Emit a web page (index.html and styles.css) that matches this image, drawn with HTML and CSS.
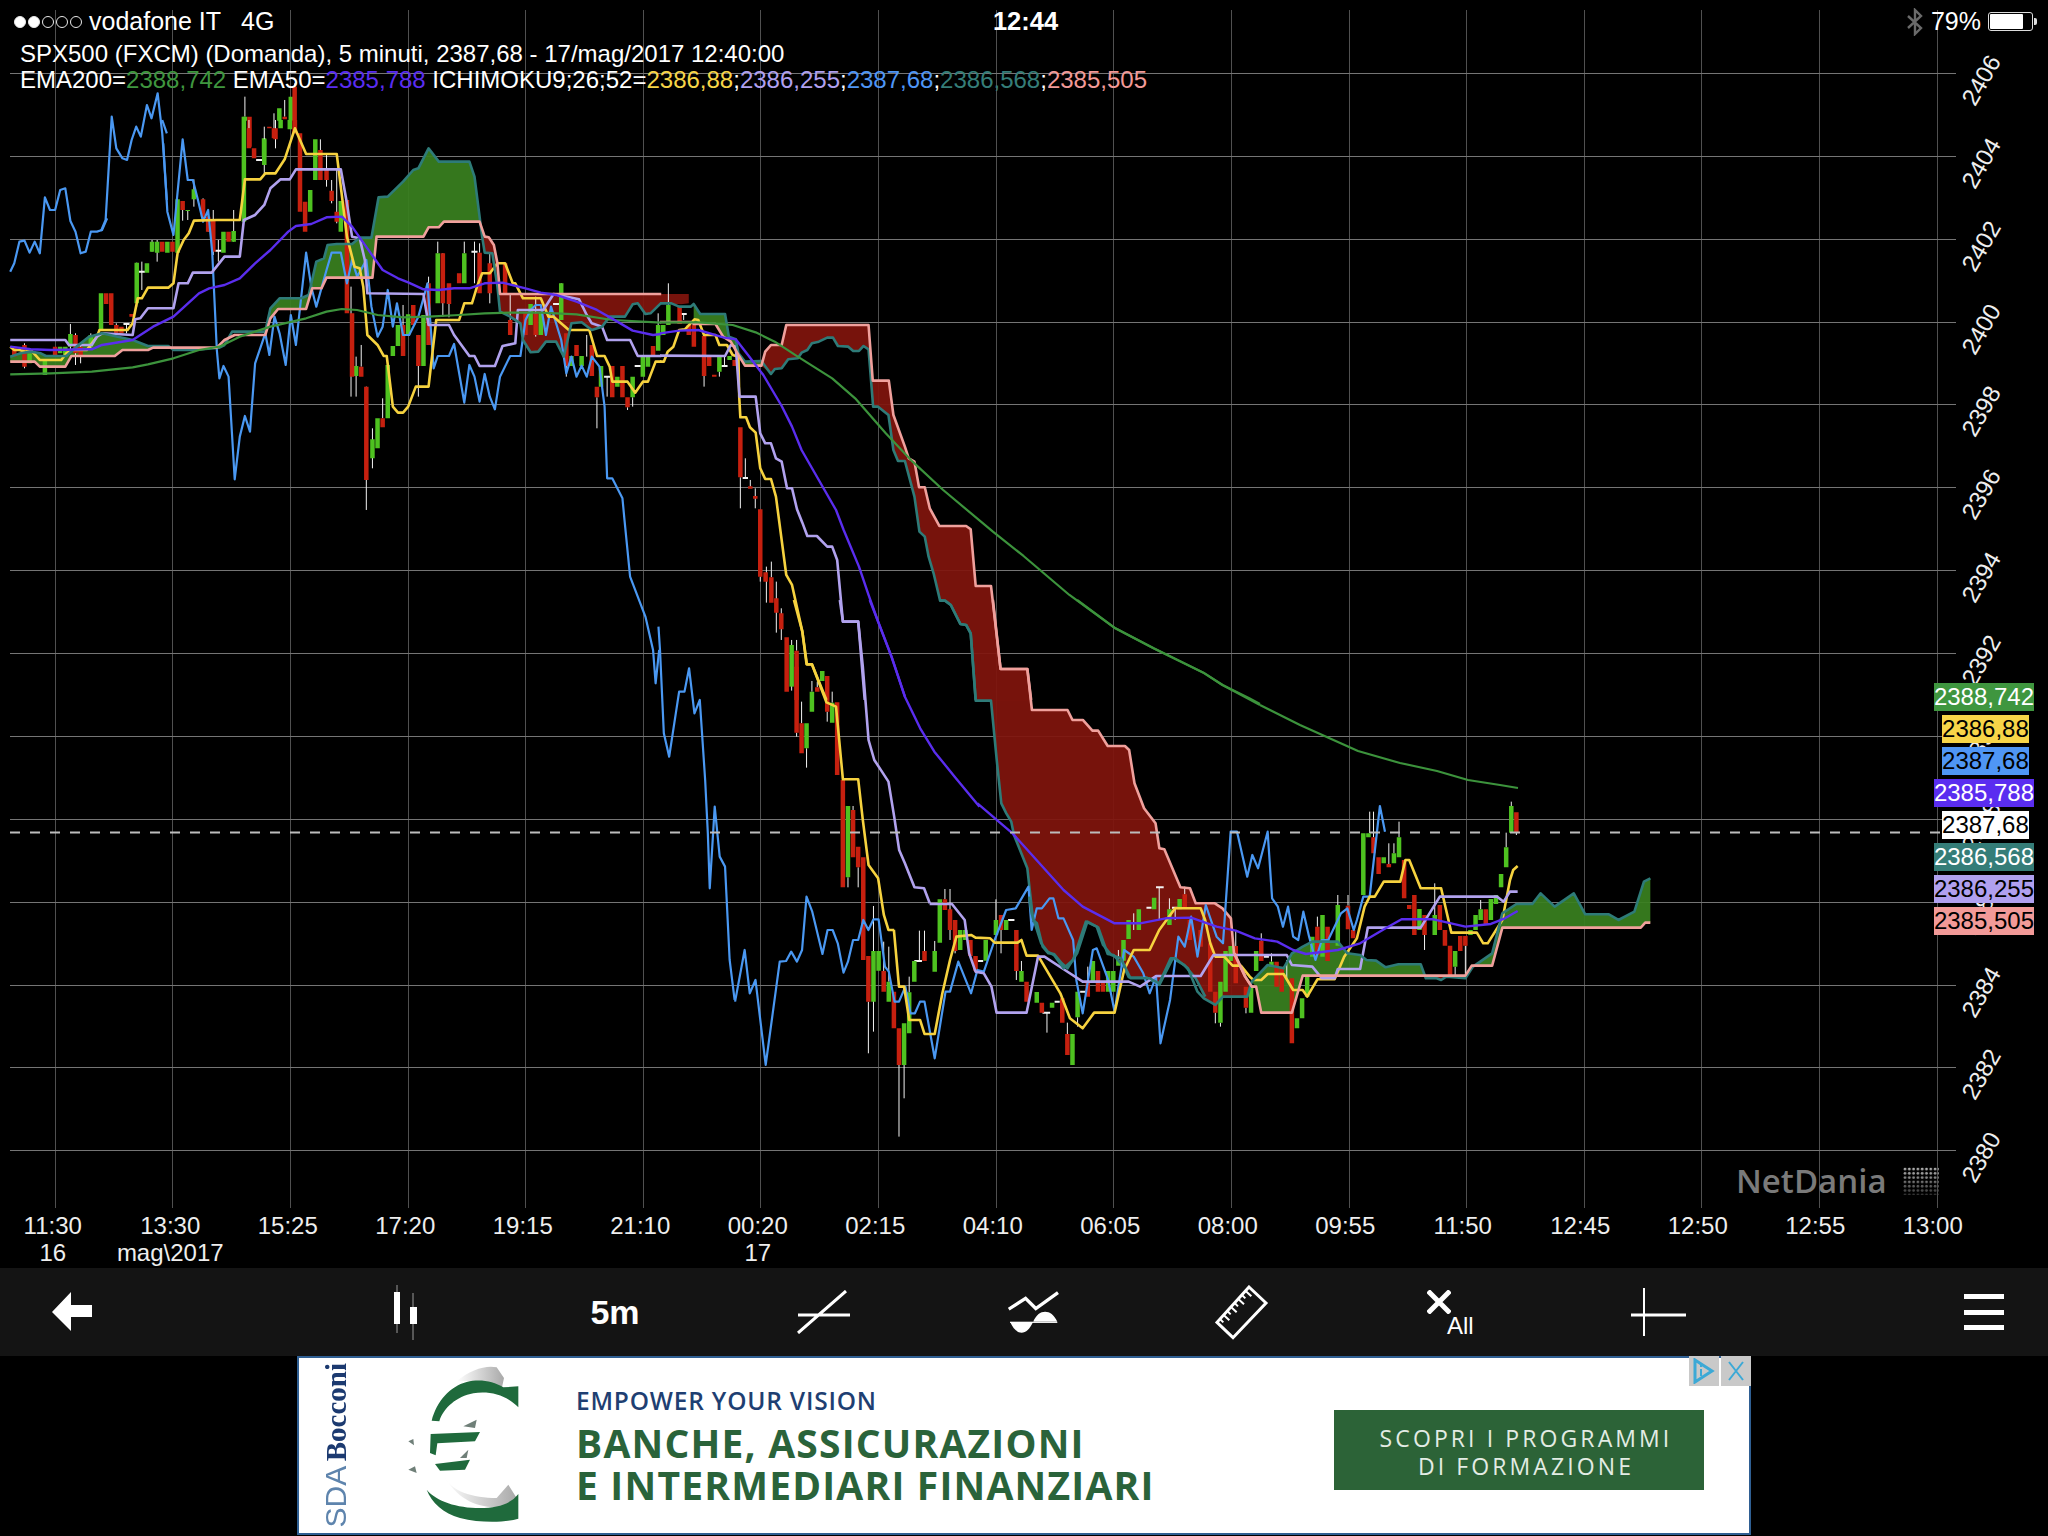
FILE: index.html
```html
<!DOCTYPE html>
<html lang="it">
<head>
<meta charset="utf-8">
<title>SPX500 chart</title>
<link rel="stylesheet" href="styles.css">
</head>
<body>
<div class="page">
  <section class="chart-area">
    <svg class="chart" width="2048" height="1208" viewBox="0 0 2048 1208">
      <defs>
        <pattern id="dots" width="4.3" height="4.3" patternUnits="userSpaceOnUse">
          <circle cx="2" cy="2" r="1.4" fill="#fff"/>
        </pattern>
        <linearGradient id="fade" x1="0" y1="0" x2="0" y2="1">
          <stop offset="0" stop-color="#bbb"/>
          <stop offset="1" stop-color="#333"/>
        </linearGradient>
        <mask id="dotmask"><rect width="2048" height="1208" fill="url(#dots)"/></mask>
      </defs>
      <path class="grid-v" d="M55.5 10V1208M172.5 10V1208M290.5 10V1208M408.5 10V1208M525.5 10V1208M643.5 10V1208M760.5 10V1208M878.5 10V1208M996.5 10V1208M1113.5 10V1208M1231.5 10V1208M1349.5 10V1208M1466.5 10V1208M1584.5 10V1208M1701.5 10V1208M1819.5 10V1208M1937.5 10V1208"/>
      <path class="grid-h" d="M10 73.5H1956M10 156.5H1956M10 239.5H1956M10 322.5H1956M10 404.5H1956M10 487.5H1956M10 570.5H1956M10 653.5H1956M10 736.5H1956M10 819.5H1956M10 902.5H1956M10 985.5H1956M10 1067.5H1956M10 1150.5H1956"/>

      <text class="ylab" transform="translate(1981 80) rotate(-60)">2406</text>
      <text class="ylab" transform="translate(1981 163) rotate(-60)">2404</text>
      <text class="ylab" transform="translate(1981 246) rotate(-60)">2402</text>
      <text class="ylab" transform="translate(1981 329) rotate(-60)">2400</text>
      <text class="ylab" transform="translate(1981 411) rotate(-60)">2398</text>
      <text class="ylab" transform="translate(1981 494) rotate(-60)">2396</text>
      <text class="ylab" transform="translate(1981 577) rotate(-60)">2394</text>
      <text class="ylab" transform="translate(1981 660) rotate(-60)">2392</text>
      <text class="ylab" transform="translate(1981 743) rotate(-60)">2390</text>
      <text class="ylab" transform="translate(1981 826) rotate(-60)">2388</text>
      <text class="ylab" transform="translate(1981 909) rotate(-60)">2386</text>
      <text class="ylab" transform="translate(1981 992) rotate(-60)">2384</text>
      <text class="ylab" transform="translate(1981 1074) rotate(-60)">2382</text>
      <text class="ylab" transform="translate(1981 1157) rotate(-60)">2380</text>

      <!-- clouds -->
      <g transform="translate(0 120) scale(.5102 .3333)">
        <polygon class="cl-g" points="20,710 40,700 60,695 80,700 90,708 130,708 150,680 175,650 200,640 260,660 290,678 300,683 290,690 240,690 225,708 140,708 128,740 78,740 68,725 20,725"/>
        <polygon class="cl-g" points="520,635 530,565 548,535 590,535 605,525 620,425 635,415 642,375 660,372 690,372 705,353 728,353 742,232 760,230 790,185 810,150 820,145 840,85 860,125 920,125 930,170 945,350 940,305 870,305 860,322 840,322 830,350 738,350 730,473 640,473 630,505 612,505 600,567 545,567 530,595 520,645"/>
        <polygon class="cl-r" points="945,350 958,352 968,375 975,430 980,522 1350,522 1350,550 1335,553 1295,550 1275,580 1265,582 1250,550 1240,553 1225,590 1195,590 1180,620 1160,630 1140,607 1120,610 1105,710 1090,665 1070,665 1055,695 1040,697 1025,660 1020,610 1000,590 980,575 975,500 965,400 950,398"/>
      </g>
      <g transform="translate(660 300) scale(.38265 .3333)">
        <polygon class="cl-g" points="88,12 105,42 170,42 180,110 198,118 205,160 222,185 265,183 265,197 222,197 205,165 185,125 165,110 145,72 88,72"/>
        <polygon class="cl-r" points="265,197 275,155 290,135 318,135 330,75 545,75 556,242 598,242 610,345 640,440 650,475 665,485 677,562 692,562 705,625 730,678 800,678 812,688 825,858 865,858 890,1107 960,1107 970,1201 825,1201 812,1000 800,975 785,972 760,915 745,902 732,902 715,820 702,770 692,710 678,695 665,590 640,483 622,483 610,450 597,345 570,320 557,320 545,148 532,138 520,153 505,153 492,140 465,138 452,113 437,113 415,125 397,130 385,150 370,158 360,175 335,178 318,205 300,207 290,222"/>
      </g>
      <g transform="translate(660 600) scale(.38265 .3333)">
        <polygon class="cl-r" points="825,300 868,300 880,300 972,300 972,330 1065,330 1078,360 1105,360 1130,392 1145,392 1170,438 1215,438 1226,450 1240,550 1265,625 1295,670 1305,745 1318,748 1360,862 1385,865 1400,910 1450,910 1470,925 1492,955 1500,1060 1529,1130 1546,1160 1546,1190 1471,1190 1451,1215 1421,1195 1400,1135 1370,1095 1340,1075 1305,1155 1272,1133 1225,1132 1212,1100 1185,1065 1170,1062 1145,982 1117,965 1090,1060 1065,1105 1050,1090 1030,1062 1015,1060 1000,1040 985,970 975,960 960,810 925,705 918,665 905,640 892,610 880,480 865,302 825,302"/>
      </g>
      <g transform="translate(700 780) scale(.6378 .3333)">
        <polygon class="cl-g" points="865,605 890,555 915,565 928,520 945,500 960,485 1000,485 1015,520 1035,525 1045,540 1060,542 1075,562 1095,553 1130,553 1138,587 945,587 928,698 880,698 872,620"/>
        <polygon class="cl-r" points="1138,587 1200,587 1200,595 1170,590 1162,600 1155,595 1138,595"/>
        <polygon class="cl-g" points="1200,590 1212,560 1242,520 1250,460 1258,400 1280,372 1305,372 1318,340 1340,380 1370,340 1388,403 1425,403 1440,420 1465,395 1480,305 1490,295 1490,428 1482,428 1475,443 1258,443 1242,557 1210,557"/>
      </g>

      <!-- candles -->
      <g transform="translate(0 0) scale(.7653 .3333)">
        <path class="wick" d="M320 290V350M358 340V385M372 300V350M385 250V260"/>
        <path class="c-up" d="M320 350V362M365 325V362M380 290V362M345 415V470"/>
        <path class="c-dn" d="M326 350V440M372 350V358M385 260V400M358 385V415"/>
      </g>
      <g transform="translate(0 120) scale(.5102 .3333)">
        <path class="wick" d="M48 670V745M138 612V690M148 640V735M158 670V730M178 640V690M228 610V640M248 612V640M278 425V510M268 428V560M298 360V395M308 360V425M348 238V410M358 243V302M368 270V300M380 178V260M398 235V300M408 270V335M418 270V405M428 360V425M458 270V365M488 0V25M518 20V165M540 0V85M628 58V90M640 100V200M650 180V250M660 150V310M688 500V830M698 710V830M708 675V740M718 800V1170M730 925V1045M750 835V895M790 555V615M820 645V830M840 470V490M858 365V400M868 400V590M880 550V592M910 365V400M930 365V490M940 370V398M960 400V550M1000 520V600M1050 530V650M1100 490V600M1110 738V770M1150 645V710M1170 832V925M1190 770V830M1230 862V870M1240 832V860M1290 580V615M1310 490V555M1340 582V600M1380 768V800M1410 755V770M1420 708V740"/>
        <path class="doji" d="M242 612H254M272 455H284M422 392H434M502 120H514M924 395H936M1184 770H1196M1334 582H1346M1414 738H1426M1084 552H1096M1244 738H1256"/>
        <path class="c-up" d="M58 700V730M88 720V765M118 680V700M128 680V705M138 642V680M178 645V680M198 520V630M268 428V550M288 430V458M298 365V395M308 365V398M328 365V398M348 238V398M368 270V273M380 208V238M438 335V398M458 333V365M478 -10V305M518 58V135M550 0V25M568 0V28M608 210V275M618 58V180M668 243V335M698 738V768M730 958V1015M740 895V985M760 735V895M770 678V708M780 615V678M800 583V645M830 585V738M858 400V550M910 400V490M1040 552V615M1060 580V645M1100 490V600M1120 708V738M1140 708V738M1178 738V800M1210 770V800M1240 770V832M1260 708V770M1270 708V740M1290 615V692M1300 615V645M1310 555V615M1410 710V755M1430 708V720"/>
        <path class="c-dn" d="M28 680V710M48 675V740M108 680V710M148 645V700M158 680V710M208 520V552M218 520V615M228 615V640M238 620V640M258 582V590M318 365V395M338 365V395M358 243V270M398 238V290M408 290V335M418 300V395M448 335V365M488 25V85M498 85V115M528 20V25M540 25V58M578 0V40M588 40V275M598 245V335M628 90V180M640 150V180M650 212V243M660 275V305M680 240V580M690 580V770M708 740V770M718 800V1080M750 895V922M790 615V708M810 555V615M820 645V738M840 490V675M868 400V550M880 490V552M900 460V490M940 398V520M960 430V520M990 430V520M1000 600V645M1030 580V645M1050 580V645M1110 640V738M1130 675V708M1160 675V768M1170 800V832M1200 738V832M1220 738V832M1230 832V862M1280 678V708M1332 560V612M1350 615V645M1360 615V680M1380 648V768M1390 708V738M1400 764V770M1440 720V738"/>
      </g>
      <g transform="translate(660 300) scale(.38265 .3333)">
        <path class="wick" d="M210 532V625M223 475V534M236 540V560M249 565V625M262 830V845M278 800V908M291 785V832M304 845V998M317 925V1020M344 1020V1172M357 1020V1052"/>
        <path class="doji" d="M216 534H230"/>
        <path class="c-up" d="M344 1035V1160"/>
        <path class="c-dn" d="M210 382V532M236 559V566M249 588V596M262 628V830M276 817V845M291 832V908M304 895V938M317 940V988M331 1012V1175M357 1052V1200"/>
      </g>
      <g transform="translate(660 600) scale(.38265 .3333)">
        <path class="wick" d="M370 305V370M383 445V503M397 243V275M411 245V262M437 335V365M450 275V308M357 398V410"/>
        <path class="c-up" d="M383 370V445M397 275V335M424 213V243M450 308V368"/>
        <path class="c-dn" d="M357 200V398M370 370V460M411 262V275M437 228V335M463 307V525"/>
      </g>
      <g transform="translate(700 780) scale(.6378 .3333)">
        <path class="wick" d="M232 292V322M240 78V90M248 262V322M264 665V820M272 378V755M288 485V573M296 500V605M312 855V1070M320 855V955M328 590V637M344 452V543M352 452V513M368 483V513M384 327V358M392 327V480M400 450V520M464 358V420M472 405V520M496 573V600M504 543V573M544 698V758M576 728V762M592 712V740M608 560V605M656 510V540M664 540V590M680 400V450M720 322V420M736 355V388M745 383V420M760 320V343M808 698V730M816 728V740M840 450V498M856 683V700M880 460V482M896 520V545M920 540V600M968 410V440M1000 345V375M1016 345V377M1050 95V160M1056 95V172M1080 190V252M1088 190V220M1096 125V172M1136 465V510M1152 310V405M1184 560V590M1200 497V590M1224 360V388M1264 158V202M1272 65V78M1280 158V165"/>
        <path class="doji" d="M715 322H727M700 383H708M740 383H750M483 420H493M537 698H549M556 665H564M596 635H606M884 530H892M336 543H348M436 543H444"/>
        <path class="c-up" d="M232 78V292M272 513V665M280 513V572M296 605V665M320 730V855M328 637V760M336 543V605M368 513V575M376 358V488M408 450V510M416 450V480M448 480V542M464 420V465M480 420V450M504 573V605M528 636V668M552 668V683M584 762V855M592 635V712M616 543V605M640 573V635M648 573V635M656 540V557M664 480V542M672 420V477M688 388V450M712 353V388M736 388V435M752 357V388M816 605V728M824 513V635M832 498V543M864 620V698M872 513V573M896 545V560M936 715V745M944 655V715M952 590V650M960 470V530M976 405V530M1000 375V497M1040 160V345M1048 160V172M1072 232V250M1088 220V250M1096 172V232M1128 387V450M1152 405V465M1184 513V560M1208 450V465M1216 405V450M1224 388V420M1240 357V420M1248 345V372M1256 282V322M1264 202V262M1272 78V158"/>
        <path class="c-dn" d="M224 0V322M240 90V232M248 200V262M256 232V540M264 528V665M288 573V635M304 635V745M312 745V855M352 513V543M384 358V390M392 388V450M400 420V513M424 480V528M432 528V572M472 405V450M496 450V573M512 605V665M536 668V698M568 655V728M576 762V825M608 605V650M624 573V635M632 605V635M760 343V385M768 420V480M785 450V500M800 490V635M808 635V698M840 498V610M856 620V683M880 482V543M904 545V620M912 560V635M928 595V790M968 440V525M984 440V543M1016 377V448M1024 450V475M1056 172V220M1064 232V282M1080 252V262M1104 240V355M1112 375V387M1120 345V465M1136 405V465M1160 375V450M1168 450V497M1176 497V587M1192 468V513M1200 468V497M1232 388V435M1280 97V158"/>
      </g>

      <!-- z1 upper part of the blue line -->
      <g transform="translate(0 0) scale(.7653 .3333)">
        <path class="l-blue" d="M132 693L138 660L146 350L152 445L160 475L166 480L172 420L178 380L184 410L192 315L198 355L206 280L212 400L218 600"/>
      </g>
      <g transform="translate(0 120) scale(.5102 .3333)">
        <path class="l-blue" d="M20 455L28 430L38 365L48 362L58 398L68 365L78 400L88 232L98 270L108 270L118 210L128 205L138 303L148 335L158 400L168 395L178 335L190 335L200 330L210 295"/>
        <path class="l-blue" d="M320 70L328 275L340 345L358 58L368 180L378 180L388 240L398 305L408 270L416 398L425 690L430 775L438 738L448 770L460 1078L470 950L480 888L490 935L500 730L520 640L528 705L538 590L548 640L560 735L570 585L580 675L600 398L610 500L620 560L640 450L650 398L668 398L680 490L690 420L700 470L718 420L728 560L740 650L750 620L760 510L770 620L778 550L790 645L802 645L820 590L838 490L850 745L858 708L880 708L890 672L900 760L910 848L920 735L930 770L940 845L950 762L960 830L970 868L980 770L1000 708L1020 708L1030 600L1040 570L1050 555L1060 555L1070 645L1080 560L1100 660L1110 760L1120 710L1130 770L1140 737L1150 770L1160 710L1175 740L1185 860L1190 1075L1200 1075L1220 1135L1224 1200L1235 1370L1265 1490L1280 1590L1285 1690L1292 1590"/>
        <path class="l-yellow" d="M20 680L28 690L38 690L50 695L60 690L78 720L120 720L130 700L140 690L170 690L190 650L195 630L250 630L260 610L270 535L278 535L290 503L330 503L340 490L348 400L360 360L370 340L380 302L425 300L470 300L480 178L510 178L520 160L540 160L558 118L578 25L600 102L660 102L672 250L680 350L695 440L705 445L712 500L720 645L740 675L752 708L758 708L770 860L780 878L790 878L800 860L815 800L840 800L855 600L900 600L910 550L925 550L935 500L945 460L960 460L975 430L990 430L1005 490L1010 490L1025 535L1060 535L1075 590L1085 590L1115 630L1155 630L1170 708L1185 708L1195 740L1200 785L1230 785L1245 818L1260 785L1270 785L1285 725L1296 725"/>
        <path class="l-lav" d="M20 660L128 660L135 675L180 675L190 650L200 640L260 645L265 598L275 595L290 565L340 565L350 490L368 490L378 458L415 458L440 410L470 410L478 300L500 285L518 255L530 205L550 178L568 178L580 148L668 148L680 250L690 350L705 355L715 420L720 520L830 522L840 615L880 615L890 645L920 708L930 708L940 738L970 738L985 678L1010 670L1015 570L1065 570L1085 522L1135 538L1150 585L1160 610L1180 620L1190 660L1235 660L1250 708L1296 708"/>
        <path class="l-teal" d="M20 710L40 700L60 695L80 700L90 708L130 708L150 680L175 650L200 640L260 660L290 678L330 678L340 690L380 690L430 683L440 675L455 635L520 635L530 565L548 535L590 535L605 525L620 425L635 415L642 375L660 372L690 372L705 353L728 353L742 232L760 230L790 185L810 150L820 145L840 85L860 125L920 125L930 170L945 350L950 398L965 400L975 500L980 575L1000 590L1020 610L1025 660L1040 697L1055 695L1070 665L1090 665L1105 710L1120 610L1140 607L1160 630L1180 620L1195 590L1225 590L1240 553L1250 550L1265 582L1275 580L1295 550"/>
        <path class="l-pink" d="M20 725L68 725L78 740L128 740L140 708L225 708L240 690L290 690L300 683L425 683L440 660L460 645L520 645L530 595L545 567L600 567L612 505L630 505L640 473L730 473L738 350L830 350L840 322L860 322L870 305L940 305L950 350L958 352L968 375L975 430L980 522L1296 522"/>
        <path class="l-ema200" d="M20 763L100 760L180 755L260 742L290 733L340 715L390 690L430 680L470 650L530 620L600 595L640 575L670 567L700 570L740 585L790 592L840 590L900 585L950 580L1000 578L1060 578L1130 583L1200 600L1296 608"/>
        <path class="l-ema50" d="M20 680L60 688L100 690L180 688L200 675L260 660L300 620L340 590L390 520L410 505L440 495L470 475L500 430L530 390L565 335L580 318L610 312L640 292L670 290L690 320L720 385L750 450L780 475L800 487L830 508L860 510L890 505L920 505L950 490L985 488L1030 505L1060 518L1090 525L1130 545L1170 570L1210 605L1240 632L1280 645L1296 642"/>
      </g>
      <g transform="translate(0 0) scale(.7653 .3333)">
        <path class="l-blue" d="M212 360L218 400"/>
      </g>
      <g transform="translate(660 300) scale(.38265 .3333)">
        <path class="l-yellow" d="M0 185L10 185L20 155L35 140L50 90L65 88L90 58L100 60L115 105L145 105L155 135L175 135L190 165L205 170L207 290L210 352L225 352L235 382L250 398L262 505L275 537L290 537L303 590L330 825L345 855L372 995L383 1093L397 1093L435 1200"/>
        <path class="l-lav" d="M0 167L170 168L185 135L198 140L205 250L208 290L250 290L262 400L275 430L290 430L303 475L318 485L332 565L345 565L358 628L372 668L385 708L410 708L437 740L450 740L463 780L478 965L518 965L535 1200"/>
        <path class="l-teal" d="M0 10L30 10L50 20L80 20L88 12L105 42L170 42L180 110L198 118L205 160L222 185L265 183L290 222L300 207L318 205L335 178L360 175L370 158L385 150L397 130L415 125L437 113L452 113L465 138L492 140L505 153L520 153L532 138L545 148L557 320L570 320L597 345L610 450L622 483L640 483L665 590L678 695L692 710L702 770L715 820L732 902L745 902L760 915L785 972L800 975L812 1000L825 1200"/>
        <path class="l-pink" d="M0 66L80 66L88 72L145 72L165 110L185 125L205 165L222 197L265 197L275 155L290 135L318 135L330 75L545 75L556 242L598 242L610 345L640 440L650 475L665 485L677 562L692 562L705 625L730 678L800 678L812 688L825 858L865 858L890 1107L960 1107L970 1200"/>
        <path class="l-ema200" d="M0 67L100 67L190 75L250 97L300 125L360 170L450 235L510 295L590 400L660 485L740 570L870 695L950 768L1070 885L1190 985L1290 1045L1420 1118L1470 1155L1540 1195L1568 1212"/>
        <path class="l-ema50" d="M0 100L50 92L100 90L165 112L198 118L230 165L270 225L318 318L345 380L370 450L400 510L430 570L460 630L480 690L520 800L545 885L570 965L605 1070L640 1190"/>
      </g>
      <g transform="translate(660 600) scale(.38265 .3333)">
        <path class="l-blue" d="M-4 80L0 150L10 400L24 470L50 275L64 275L76 205L90 340L104 300L118 540L125 700L130 865L143 620L156 770L170 800L182 1080L195 1200"/>
        <path class="l-yellow" d="M350 0L372 95L384 193L397 193L435 307L460 320L478 538L518 538L530 660L545 795L570 835L585 945L597 990L612 990"/>
        <path class="l-lav" d="M470 0L478 65L518 65L530 200L545 420L560 480L580 515L597 545L612 650L625 750L640 790L665 862L690 865L705 910"/>
        <path class="l-teal" d="M730 0L745 2L760 15L785 72L800 75L812 100L825 302L865 302L880 480L892 610L905 640L918 665L925 705L960 805L975 960L985 970L1000 1040L1015 1060L1030 1062L1050 1090L1065 1105L1090 1060L1117 965L1145 982L1170 1062L1185 1065L1212 1100L1225 1132L1272 1133L1305 1155L1340 1075L1370 1095L1400 1135L1425 1190"/>
        <path class="l-pink" d="M870 0L890 207L960 207L972 330L1065 330L1078 360L1105 360L1130 392L1145 392L1170 438L1215 438L1226 450L1240 550L1265 625L1295 670L1305 745L1318 748L1360 862L1385 865L1400 910L1450 910L1470 925L1492 955L1500 1060L1529 1130L1546 1160"/>
        <path class="l-ema200" d="M1090 0L1190 85L1290 145L1420 218L1470 255L1568 315"/>
        <path class="l-ema50" d="M548 0L570 65L605 170L640 290L680 385L717 455L770 530L835 620"/>
      </g>
      <path class="l-ema200" d="M1260 705L1300 725L1358 751L1400 763L1437 771L1468 780L1500 785L1518 788"/>
      <g transform="translate(700 780) scale(.6378 .3333)">
        <path class="l-blue" d="M55 665L70 510L78 640L87 600L103 855L125 545L135 543L143 515L152 545L160 510L167 350L176 395L192 522L200 450L208 450L216 490L225 578L232 545L240 480L248 480L256 420L264 450L272 418L280 418L290 560L296 575L305 665L312 665L322 620L330 700L337 700L345 665L352 665L368 835L385 635L392 635L405 545L425 640L435 570L445 575L462 480L480 390L495 385L515 320L520 450L528 385L536 385L548 355L554 355L562 415L570 415L585 480L590 600L600 700L616 510L622 505L640 600L650 695L665 510L680 530L695 580L705 640L715 590L722 790L737 660L750 470L760 500L770 410L780 530L793 375L810 470L820 490L832 155L842 155L858 290L866 225L875 265L890 155L897 355L906 380L914 440L922 380L930 470L938 480L946 395L955 470L965 540L975 480L985 480L1005 400L1015 385L1025 450L1030 420L1040 350L1050 350L1066 78L1074 155"/>
        <path class="l-yellow" d="M304 450L312 620L320 620L328 720L345 720L352 762L368 762L380 640L392 540L402 470L425 465L432 473L455 475L462 488L498 488L504 480L512 527L530 527L565 640L580 715L600 745L618 698L650 698L665 570L680 510L705 510L720 450L745 385L785 385L792 420L800 490L808 530L822 530L835 557L848 557L862 590L868 600L880 600L890 582L915 582L930 630L945 630L952 650L968 598L995 598L1010 530L1030 475L1042 380L1050 350L1058 350L1072 305L1098 305L1106 240L1112 240L1130 325L1162 325L1178 458L1218 458L1228 490L1235 490L1258 420L1270 300L1275 270L1282 258"/>
        <path class="l-lav" d="M360 372L395 372L415 420L422 520L432 575L445 580L457 620L465 698L512 698L530 530L540 530L572 570L600 605L672 605L690 620L715 588L785 588L805 525L920 525L928 555L960 560L975 595L995 595L1000 567L1035 567L1047 443L1130 443L1160 350L1250 350L1260 365L1270 335L1282 335"/>
        <path class="l-teal" d="M516 350L520 400L535 490L545 515L555 525L570 565L585 540L605 425L622 440L632 495L645 525L660 535L675 595L705 595L720 610L738 535L745 535L765 565L780 635L790 655L808 675L820 650L858 650L865 605L890 555L915 565L928 520L945 500L960 485L1000 485L1015 520L1035 525L1045 540L1060 542L1075 562L1095 553L1130 553L1138 595L1155 595L1162 600L1170 590L1200 595L1212 560L1242 520L1258 400L1280 372L1305 372L1318 340L1340 380L1370 340L1388 403L1425 403L1440 420L1465 395L1480 305L1490 295"/>
        <path class="l-pink" d="M838 520L855 590L865 620L872 620L880 698L928 698L945 587L1200 587L1210 557L1242 557L1258 443L1475 443L1482 428L1490 428"/>
        <path class="l-ema50" d="M435 70L490 160L570 330L600 380L650 430L690 430L730 415L770 413L810 440L840 452L870 475L905 485L930 510L950 522L1000 510L1035 490L1075 445L1100 418L1150 418L1200 440L1240 432L1262 415L1282 393"/>
      </g>
      <path class="dash" d="M10 832.5H1940"/>
    </svg>

    <div class="status">
      <div class="status-left">
        <span class="dots"><i class="dot on"></i><i class="dot on"></i><i class="dot"></i><i class="dot"></i><i class="dot"></i></span>
        <span>vodafone IT</span>
        <span class="net">4G</span>
      </div>
      <div class="clock">12:44</div>
      <div class="status-right">
        <svg class="bt" width="18" height="28" viewBox="0 0 18 28"><path d="M2 8L15 20L9 26V2L15 8L2 20"/></svg>
        <span>79%</span>
        <span class="battery"><span class="battery-fill"></span></span>
        <span class="battery-nub"></span>
      </div>
    </div>

    <div class="legend">
      <div>SPX500 (FXCM) (Domanda), 5 minuti, 2387,68 - 17/mag/2017 12:40:00</div>
      <div>EMA200=<span class="t-green">2388,742</span> EMA50=<span class="t-purple">2385,788</span> ICHIMOKU9;26;52=<span class="t-yellow">2386,88</span>;<span class="t-lav">2386,255</span>;<span class="t-blue">2387,68</span>;<span class="t-teal">2386,568</span>;<span class="t-pink">2385,505</span></div>
    </div>

    <div class="prices">
      <span class="price p-green">2388,742</span>
      <span class="price p-narrow p-yellow">2386,88</span>
      <span class="price p-narrow p-blue">2387,68</span>
      <span class="price p-purple">2385,788</span>
      <span class="price p-narrow p-white">2387,68</span>
      <span class="price p-teal">2386,568</span>
      <span class="price p-lav">2386,255</span>
      <span class="price p-pink">2385,505</span>
    </div>

    <div class="brand">
      <span>NetDania</span>
      <svg width="36" height="28" viewBox="0 0 36 28"><rect width="36" height="28" fill="url(#fade)" mask="url(#dotmask)"/></svg>
    </div>

    <div class="axis">
      <span>11:30</span><span>13:30</span><span>15:25</span><span>17:20</span><span>19:15</span><span>21:10</span><span>00:20</span><span>02:15</span><span>04:10</span><span>06:05</span><span>08:00</span><span>09:55</span><span>11:50</span><span>12:45</span><span>12:50</span><span>12:55</span><span>13:00</span>
      <span>16</span><span>mag\2017</span><span></span><span></span><span></span><span></span><span>17</span>
    </div>
  </section>

  <nav class="toolbar">
    <div class="tool tool-back">
      <svg class="fill" width="40" height="40" viewBox="0 0 40 40"><path d="M0 20L19 0V13H40V25H19V39Z"/></svg>
    </div>
    <div class="tool">
      <svg width="24" height="55" viewBox="0 0 24 55">
        <path class="ic-wick" d="M3 0V48M19 8V55"/>
        <rect class="ic-body" x="0" y="7" width="6" height="32"/>
        <rect class="ic-body" x="16" y="22" width="7" height="17"/>
      </svg>
    </div>
    <div class="tool tool-text">5m</div>
    <div class="tool">
      <svg class="stroke" width="54" height="44" viewBox="0 0 54 44"><path d="M1 43L49 1M1 25H53"/></svg>
    </div>
    <div class="tool">
      <svg width="51" height="43" viewBox="80 60 152 130">
        <path class="ic-line" d="M81 115L132 82L163 113L230 65"/>
        <path class="ic-wave" d="M85 153H155C145 175 133 186 120 186C107 186 95 175 85 153ZM155 153C165 132 177 123 191 123C205 123 218 132 228 153Z"/>
        <path class="ic-axis" d="M85 155H228"/>
      </svg>
    </div>
    <div class="tool tool-ruler">
      <svg width="55" height="55" viewBox="700 38 165 165">
        <path class="ic-ruler" d="M805 44L856 92L757 196L709 150Z"/>
        <path class="ic-ticks" d="M795 56L812 72M784 68L794 78M773 80L790 96M762 92L772 102M751 104L768 120M740 116L750 126M729 128L746 144M718 140L728 150"/>
      </svg>
    </div>
    <div class="tool tool-all">
      <svg class="x" width="24" height="24" viewBox="0 0 24 24"><path d="M1 1L23 23M23 1L1 23"/></svg>
      <span>All</span>
    </div>
    <div class="tool tool-cross">
      <svg width="56" height="48" viewBox="0 0 56 48"><path class="ic-cross-v" d="M13 0V48"/><path class="ic-cross-h" d="M0 27H55"/></svg>
    </div>
    <div class="tool tool-menu">
      <span class="menu-bar"></span><span class="menu-bar"></span><span class="menu-bar"></span>
    </div>
  </nav>

  <aside class="ad-strip">
    <div class="ad">
      <div class="ad-brand"><span class="sda">SDA</span> <span class="bocconi">Bocconi</span></div>
      <svg class="euro" width="120" height="176" viewBox="300 0 360 528">
        <defs>
          <linearGradient id="silver" x1="0" y1="0" x2="1" y2="0">
            <stop offset="0" stop-color="#fff"/>
            <stop offset="1" stop-color="#a9a9a9"/>
          </linearGradient>
        </defs>
        <path class="eu-silver" d="M470 70C510 35 560 20 590 28L612 60L606 88C560 68 510 68 470 70Z"/>
        <path class="eu-green" d="M395 188C410 130 450 85 500 72C540 62 580 70 610 88L655 85V148C620 112 570 98 520 106C470 115 430 150 418 190Z"/>
        <path class="eu-green" d="M392 228L540 222L525 250L412 256L407 292L390 285Z"/>
        <path class="eu-green" d="M405 318L510 305L495 335L420 338Z"/>
        <path class="eu-grey" d="M490 205L530 185L525 210ZM480 300L505 275L500 300ZM325 250L340 243L342 262ZM325 335L345 325L350 345Z"/>
        <path class="eu-silver" d="M430 350C450 400 520 420 590 420L625 380L650 420L640 440C560 460 480 440 430 350Z"/>
        <path class="eu-green" d="M380 395C410 430 470 450 540 450C590 450 630 440 655 408V482C610 495 540 495 480 480C430 465 395 435 380 395Z"/>
      </svg>
      <div class="ad-copy">
        <div class="ad-tag">EMPOWER YOUR VISION</div>
        <div class="ad-title">BANCHE, ASSICURAZIONI</div>
        <div class="ad-title">E INTERMEDIARI FINANZIARI</div>
      </div>
      <div class="ad-cta">SCOPRI I PROGRAMMI<br>DI FORMAZIONE</div>
      <div class="ad-badges">
        <span class="ad-badge">
          <svg width="22" height="26" viewBox="0 0 22 26"><path class="ab-line" d="M2 2L19 13L2 24Z"/><path class="ab-line-thin" d="M8 11V18M8 7V9"/></svg>
        </span>
        <span class="ad-badge">
          <svg width="18" height="22" viewBox="0 0 18 22"><path class="ab-line-thin" d="M2 2L16 20M16 2L2 20"/></svg>
        </span>
      </div>
    </div>
  </aside>
</div>
</body>
</html>
```
FILE: styles.css
```css
* { box-sizing: border-box; }
html, body { margin: 0; padding: 0; background: #000; }
body { font-family: "Liberation Sans", Arial, sans-serif; color: #fff; }
.page { width: 2048px; height: 1536px; display: flex; flex-direction: column; overflow: hidden; background: #000; }

.chart-area { position: relative; height: 1268px; flex: none; }
.chart { display: block; }
.chart path { fill: none; vector-effect: non-scaling-stroke; }
.grid-v { stroke: #505050; stroke-width: 1; }
.grid-h { stroke: #757575; stroke-width: 1; }
.ylab { font: 24px "Liberation Sans", Arial, sans-serif; fill: #eee; text-anchor: middle; dominant-baseline: central; }
.cl-g { fill: #39801f; opacity: .93; }
.cl-r { fill: #80140d; opacity: .93; }
.chart .wick { stroke: #f2f2f2; stroke-width: 1; }
.chart .doji { stroke: #f2f2f2; stroke-width: 2; }
.chart .c-up { stroke: #4ec220; stroke-width: 4.5; }
.chart .c-dn { stroke: #c6200f; stroke-width: 4.5; }
.chart .l-blue { stroke: #4a98f2; stroke-width: 2.2; stroke-linejoin: round; }
.chart .l-yellow { stroke: #f6d23f; stroke-width: 2.6; stroke-linejoin: round; }
.chart .l-lav { stroke: #b1a2ee; stroke-width: 2.6; stroke-linejoin: round; }
.chart .l-teal { stroke: #2e7b78; stroke-width: 2.6; stroke-linejoin: round; }
.chart .l-pink { stroke: #f0a09c; stroke-width: 2.6; stroke-linejoin: round; }
.chart .l-ema200 { stroke: #3c933c; stroke-width: 2.2; stroke-linejoin: round; }
.chart .l-ema50 { stroke: #5a2dee; stroke-width: 2.4; stroke-linejoin: round; }
.chart .dash { stroke: #bdbdbd; stroke-width: 2; stroke-dasharray: 10 10; }

.status { position: absolute; top: 7px; left: 0; right: 0; height: 28px; padding: 0 11px 0 14px; display: grid; grid-template-columns: 1fr auto 1fr; align-items: center; font-size: 25px; }
.status-left { display: flex; align-items: center; }
.dots { display: flex; gap: 2px; margin-right: 7px; }
.dot { display: block; width: 12px; height: 12px; border: 1px solid #e8e8e8; border-radius: 50%; }
.dot.on { background: #fff; }
.net { margin-left: 20px; }
.clock { font-weight: bold; font-size: 25.5px; }
.status-right { display: flex; align-items: center; justify-content: flex-end; }
.bt { margin-right: 7px; }
.chart-area .bt path { fill: none; stroke: #6a6a6a; stroke-width: 2.4; }
.battery { width: 45px; height: 19px; border: 1px solid #ddd; border-radius: 3px; padding: 1px; margin-left: 7px; display: block; }
.battery-fill { display: block; height: 100%; width: 33px; background: #fff; border-radius: 1px; }
.battery-nub { width: 3px; height: 7px; background: #ddd; margin-left: 1px; border-radius: 0 2px 2px 0; }

.legend { position: absolute; top: 41px; left: 20px; font-size: 24px; line-height: 26px; white-space: nowrap; }
.t-green { color: #3f963f; }
.t-purple { color: #5a2df0; }
.t-yellow { color: #f7d548; }
.t-lav { color: #b0a0ef; }
.t-blue { color: #4f96f5; }
.t-teal { color: #357d78; }
.t-pink { color: #f29a98; }

.prices { position: absolute; top: 683px; right: 14px; display: flex; flex-direction: column; align-items: center; gap: 4px; font-size: 24px; }
.price { display: block; height: 28px; line-height: 28px; color: #000; }
.p-narrow { margin-left: 3px; }
.p-green { background: #3f963f; color: #fff; }
.p-yellow { background: #f7d548; }
.p-blue { background: #4f96f5; }
.p-purple { background: #5a2df0; color: #fff; }
.p-white { background: #fff; }
.p-teal { background: #357d78; color: #fff; }
.p-lav { background: #b0a0ef; }
.p-pink { background: #f29a98; }

.brand { position: absolute; top: 1161px; left: 1736px; display: flex; align-items: center; gap: 16px; color: #7a7a7a; font: 600 33px "Open Sans", sans-serif; line-height: 40px; }

.axis { position: absolute; top: 1212px; left: -6px; display: grid; grid-template-columns: repeat(17, 117.5px); grid-auto-rows: 27px; font-size: 24px; line-height: 27px; text-align: center; color: #eee; }

.toolbar { height: 88px; flex: none; background: #141414; display: flex; align-items: center; }
.tool { width: 209px; flex: none; display: flex; justify-content: center; align-items: center; }
.tool-back { width: 144px; margin-right: 157.5px; }
.tool-text { font-size: 34px; font-weight: bold; }
.fill path { fill: #fff; }
.stroke path { fill: none; stroke: #fff; stroke-width: 3; }
.ic-wick { stroke: #999; stroke-width: 1; }
.ic-body { fill: #fff; }
.ic-line { fill: none; stroke: #fff; stroke-width: 10; }
.ic-wave { fill: #fff; }
.ic-axis { stroke: #fff; stroke-width: 3; }
.ic-ruler { fill: none; stroke: #fff; stroke-width: 9; }
.ic-ticks { fill: none; stroke: #fff; stroke-width: 6; }
.ic-cross-v { stroke: #fff; stroke-width: 2; }
.ic-cross-h { stroke: #fff; stroke-width: 3; }
.tool-ruler { padding-right: 2px; }
.tool-cross { padding-right: 2px; }
.tool-all { align-items: flex-start; padding-right: 28px; padding-top: 4px; }
.x path { fill: none; stroke: #fff; stroke-width: 5; }
.tool-all span { font-size: 24px; line-height: 24px; margin: 24px 0 0 -4px; width: 0; }
.tool-menu { width: 128px; margin-left: auto; flex-direction: column; gap: 10.5px; }
.menu-bar { display: block; width: 40px; height: 5px; background: #fff; }

.ad-strip { flex: 1; display: flex; justify-content: center; background: #000; }
.ad { position: relative; width: 1454px; height: 179px; background: #fff; border: 2px solid #2f5f93; display: flex; align-items: center; color: #2a633a; }
.ad-brand { writing-mode: vertical-rl; transform: rotate(180deg); margin-left: 20px; width: 30px; white-space: nowrap; line-height: 30px; }
.sda { font: 30px "Liberation Sans", sans-serif; color: #5e84ad; }
.bocconi { font: bold 29px "Liberation Serif", serif; color: #1c3a70; }
.euro { margin-left: 51px; }
.eu-green { fill: #1f6a3c; }
.eu-silver { fill: url(#silver); }
.eu-grey { fill: #6f7f78; }
.ad-copy { margin-left: 56px; width: 758px; }
.ad-tag { font: 600 24.5px "Open Sans", sans-serif; letter-spacing: .8px; color: #1f3f72; line-height: 28px; margin-top: 2px; margin-bottom: 7px; }
.ad-title { font: 700 39px "Open Sans", sans-serif; letter-spacing: 1.2px; line-height: 42px; white-space: nowrap; }
.ad-cta { width: 370px; height: 80px; margin-top: 8px; background: #2c6337; color: #e3ece4; font: 23px "Open Sans", sans-serif; letter-spacing: 3.1px; line-height: 28px; text-align: center; padding: 14px 0 0 14px; white-space: nowrap; }
.ad-badges { position: absolute; top: -2px; right: -2px; display: flex; gap: 2px; }
.ad-badge { width: 30px; height: 30px; background: #c9c9c9; display: flex; align-items: center; justify-content: center; }
.ab-line { fill: none; stroke: #3ca9d6; stroke-width: 3; }
.ab-line-thin { fill: none; stroke: #3ca9d6; stroke-width: 2; }
```
